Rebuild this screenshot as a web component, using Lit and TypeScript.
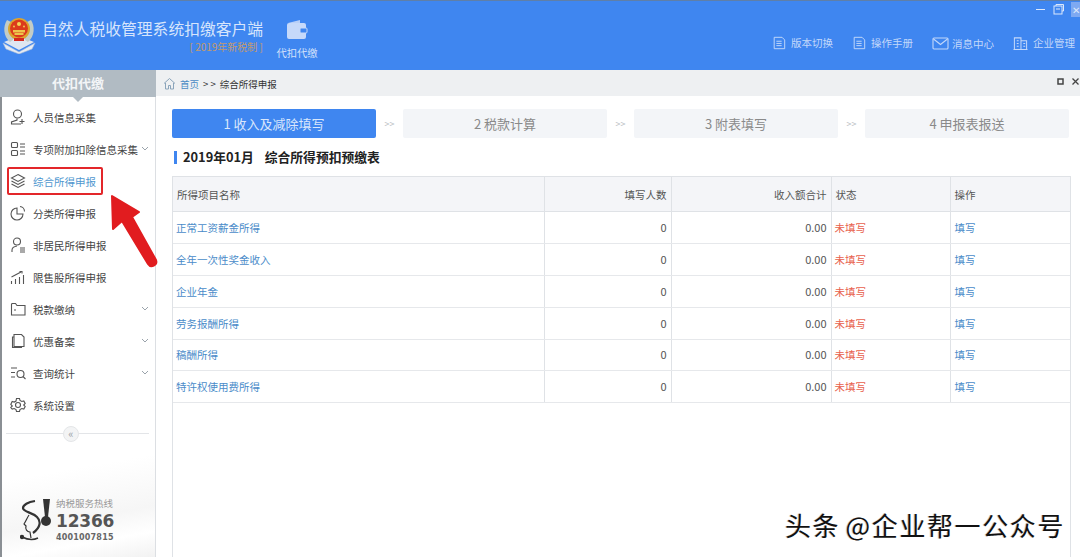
import { LitElement, html, css, svg } from "lit";
import { customElement } from "lit/decorators.js";

const s = (body: unknown, size = 16, vb = "0 0 16 16") => html`<svg width=${size} height=${size} viewBox=${vb} fill="none" stroke="currentColor" stroke-width="1.1">${body}</svg>`;

const docIcon = s(svg`<path d="M2.5 1.5h9l3 3v10h-12z"/><path d="M5 6h6M5 8.5h6M5 11h6"/>`, 14);
const mailIcon = s(svg`<rect x="1" y="2.5" width="15" height="11" rx="1"/><path d="M1.5 3.5l7 5.5 7-5.5"/>`, 17, "0 0 17 16");
const bizIcon = s(svg`<path d="M1.5 14V2h7v12M8.5 5h6v9M.5 14.5h15M4 5h2M4 8h2M4 11h2M11 8h2M11 11h2"/>`, 15);

const menu = [
  ["人员信息采集", s(svg`<circle cx="7.5" cy="5" r="4"/><path d="M7 9.5v1.5L1.5 13v2H11M12 10v5M9.5 12.5h5"/>`), false, false],
  ["专项附加扣除信息采集", s(svg`<rect x="1.5" y="1.5" width="6" height="5" rx="1"/><rect x="1.5" y="9.5" width="6" height="5" rx="1"/><path d="M10 3h5M10 6h5M10 10h5M10 13h5"/>`), true, false],
  ["综合所得申报", s(svg`<path d="M8 1.5l6.5 3.5L8 8.5 1.5 5z"/><path d="M1.5 8L8 11.5 14.5 8M1.5 11L8 14.5 14.5 11"/>`), false, true],
  ["分类所得申报", s(svg`<path d="M7 3a6 6 0 1 0 6 6H7V3z"/><path d="M10 1.500a5 5 0 0 1 4.500 5"/>`), false, false],
  ["非居民所得申报", s(svg`<circle cx="7" cy="4.500" r="3.500"/><path d="M2 15v-2c0-2 2-3.500 5-4M10 11h5M10 13h5M10 15h5"/>`), false, false],
  ["限售股所得申报", s(svg`<path d="M1.500 15v-3M5.500 15v-5M9.500 15V8M13.500 15V6M1.500 8L11 3M9.500 2.500h2.500v2"/>`), false, false],
  ["税款缴纳", s(svg`<path d="M1.500 3.500V14h13.500V4.500H7L5.500 2.500H2zM4 9h2"/>`), true, false],
  ["优惠备案", s(svg`<path d="M4 1.500h7.500l2.500 2.500v9.500H4z"/><path d="M4 4H2.500v10.500h9V13.500"/>`), true, false],
  ["查询统计", s(svg`<path d="M1 3h6M1 7.500h4M1 12h4"/><circle cx="10.500" cy="9" r="3.500"/><path d="M13 11.500l2.500 2.500"/>`), true, false],
  ["系统设置", s(svg`<circle cx="8" cy="8" r="2.500"/><path d="M6.500 1.500h3l.5 2 1.800 1 2-.6 1.400 2.600-1.500 1.500 1.500 1.500-1.400 2.600-2-.6-1.800 1-.5 2h-3l-.5-2-1.800-1-2 .6L.8 10.500 2.300 9 .8 7.500l1.400-3 2 .6 1.800-1z"/>`), false, false],
] as const;

const rows = ["正常工资薪金所得", "全年一次性奖金收入", "企业年金", "劳务报酬所得", "稿酬所得", "特许权使用费所得"];
const steps = ["1 收入及减除填写", "2 税款计算", "3 附表填写", "4 申报表报送"];

@customElement("app-root")
export class AppRoot extends LitElement {
  static styles = css`
    :host { display: block; width: 1080px; height: 557px; overflow: hidden; position: relative; background: #fff;
      font-family: "Noto Sans CJK SC", "Liberation Sans", sans-serif; color: #444; font-size: 11px; }
    .page { display: grid; grid-template-rows: 70px 1fr; height: 557px; }

    header { background: #3f86f0; border-top: 1px solid #5f7fa8; display: flex; color: #cfe0fb; position: relative; box-sizing: border-box; }
    .emblem { margin: 15px 0 0 1px; width: 36px; height: 38px; }
    .brand { margin: 16px 0 0 5px; width: 224px; }
    .brand h1 { margin: 0; font-size: 15.800px; font-weight: 400; line-height: 24px; color: #d7e5fc; white-space: nowrap; }
    .brand p { margin: -1px 0 0; text-align: right; font-size: 10px; line-height: 14px; color: #c39a6c; padding-right: 3px; white-space: nowrap; }
    .mod { margin: 18px 0 0 9px; display: flex; flex-direction: column; align-items: center; width: 44px; color: #d2e1fb; font-size: 10.300px; gap: 4px; }
    .tools { margin-left: auto; margin-top: 34px; display: flex; gap: 19px; align-items: flex-start; padding-right: 5px; height: 18px; }
    .tool { display: flex; align-items: center; gap: 5px; font-size: 10.500px; color: #c3d8fa; line-height: 16px; white-space: nowrap; }
    .tool.m { gap: 3px; }
    .winbtn { position: absolute; right: 0; top: 0; display: flex; align-items: center; gap: 7px; height: 17px; color: #dce8fc; }
    .winbtn .x { width: 9px; height: 15px; background: #7ea9f2; display: flex; align-items: center; justify-content: center; font-size: 10px; overflow: hidden; }

    .body { display: grid; grid-template-columns: 156px 1fr; min-height: 0; }
    aside { display: flex; flex-direction: column; border-left: 2px solid #8a8f94; border-right: 1px solid #dcdfe3; box-sizing: border-box; position: relative;
      background: linear-gradient(170deg, #fff 80%, #f6f6f6 90%, #fff 95%, #f2f2f2 100%); }
    .atitle { background: #b1bbc3; color: #f3f5f7; height: 27px; margin: 0 -1px 0 -2px; font-size: 13px; font-weight: 700; text-align: center; line-height: 26px; position: relative; flex: none; }
    .atitle::after { content: ""; position: absolute; left: 73px; bottom: -5px; border: 5px solid transparent; border-top-color: #b1bbc3; border-bottom: 0; }
    .list { padding-top: 4px; }
    .item { height: 32px; display: flex; align-items: center; padding-left: 8px; gap: 7px; font-size: 10.500px; color: #444; white-space: nowrap; position: relative; box-sizing: border-box; }
    .item svg { color: #555; flex: none; }
    .item .chev { position: absolute; left: 139px; top: 13px; color: #9aa3ab; }
    .item.on { color: #4f97cf; }
    .item.on::before { content: ""; position: absolute; left: 5px; top: 2px; width: 96px; height: 28px; box-sizing: border-box; border: 2px solid #e3262a; border-radius: 2px; }
    .collapse { margin: 12px 6px 0 4px; height: 1px; background: #e3e5e8; position: relative; flex: none; }
    .collapse span { position: absolute; left: 57px; top: -7px; width: 14px; height: 14px; border-radius: 50%; background: #f3f4f5; border: 1px solid #e4e6e8; color: #9aa0a6; font-size: 11px; line-height: 13px; text-align: center; }
    .hot { margin-top: auto; padding: 0 0 14px 18px; display: flex; align-items: flex-start; }
    .hot div { display: flex; flex-direction: column; color: #666; }
    .hot small { font-size: 9.500px; color: #999; line-height: 13px; }
    .hot b { font-family: "DejaVu Sans", sans-serif; font-size: 17px; line-height: 22px; letter-spacing: -.2px; color: #555; }
    .hot i { font-style: normal; font-weight: 700; font-family: "DejaVu Sans", sans-serif; font-size: 8px; line-height: 11px; color: #666; letter-spacing: .2px; }

    main { display: flex; flex-direction: column; min-width: 0; min-height: 0; }
    .crumb { background: #eef0f2; height: 26px; flex: none; display: flex; align-items: center; padding: 1px 0 0 7px; box-sizing: border-box; gap: 4px; font-size: 9.500px; color: #333; position: relative; }
    .crumb a { color: #4a8bc4; }
    .crumb .ctrl { position: absolute; right: 1px; top: 8px; display: flex; gap: 8px; align-items: center; color: #444; }
    .stepper { display: flex; align-items: stretch; margin: 13px 11px 0 16px; height: 29px; flex: none; }
    .step { width: 204px; background: #f3f5f8; color: #8a8a8a; font-size: 13px; display: flex; align-items: center; justify-content: center; border-radius: 2px; flex: none; }
    .step.on { background: #3f86f0; color: #d9e7fc; }
    .sep { width: 27px; text-align: center; color: #b8bcc1; font-size: 9px; line-height: 29px; }
    h2 { margin: 9px 0 0 18px; font-size: 12.800px; line-height: 20px; height: 20px; font-weight: 700; color: #222; flex: none; display: flex; align-items: center; gap: 6px; white-space: pre; word-spacing: 2.500px; }
    h2::before { content: ""; width: 3px; height: 13px; background: #3f86f0; }
    .tablewrap { margin: 9px 9px 0 16px; border: 1px solid #dfe2e6; border-bottom: 0; flex: 1; min-height: 0; }
    table { border-collapse: collapse; width: 897px; table-layout: fixed; font-size: 10.500px; }
    th { background: #f4f5f8; font-weight: 400; height: 34px; color: #555; text-align: left; padding: 1px 4px 0; border-right: 1px solid #dfe2e6; border-bottom: 1px solid #dfe2e6; box-sizing: border-box; white-space: nowrap; }
    td { height: 32px; padding: 0 3px 1px; border-right: 1px solid #dfe2e6; border-bottom: 1px solid #e6e8eb; box-sizing: border-box; white-space: nowrap; color: #555; font-size: 11px; }
    tr:nth-child(5) td { height: 31px; }
    th:last-child, td:last-child { border-right: 0; padding-left: 4px; }
    .r { text-align: right; padding-right: 4px; }
    td.l { color: #4a8bc9; font-size: 10.500px; padding-bottom: 0; }
    td.w { color: #e8604c; font-size: 10.500px; padding-bottom: 0; }

    .arrow { position: absolute; left: 105px; top: 193px; pointer-events: none; }
    .mark { position: absolute; left: 785px; top: 507px; font-size: 26px; line-height: 36px; color: #111; font-family: "Noto Sans CJK SC", sans-serif; font-weight: 400; white-space: nowrap; text-shadow: 1px 1px 0 #fff, -1px 0 0 #ccc; letter-spacing: 1.600px; word-spacing: -2px; }
  `;

  render() {
    return html`<div class="page">
      <header>
        <svg class="emblem" viewBox="0 0 36 38">
          <path d="M2 27l16 9 16-9-3 6-13 5-13-5z" fill="#e6ebf3" stroke="#a9bcd8" stroke-width=".6"/>
          <path d="M3 26l15 8 15-8-15-6z" fill="#dfe6f0"/>
          <path d="M6 4C2 10 2 20 9 26l3-2-2-18zM30 4c4 6 4 16-3 22l-3-2 2-18z" fill="#c3ccc6"/>
          <circle cx="18" cy="13" r="11" fill="#dca52f"/>
          <circle cx="18" cy="12.500" r="9" fill="#dc3a1c"/>
          <rect x="12" y="14" width="12" height="2.500" fill="#ecc64c"/>
          <rect x="13.500" y="17" width="9" height="2" fill="#ecc64c"/>
          <circle cx="18" cy="8" r="2" fill="#f3d354"/>
          <circle cx="13" cy="10.500" r=".9" fill="#f3d354"/><circle cx="23" cy="10.500" r=".9" fill="#f3d354"/>
          <rect x="13" y="22" width="10" height="3" fill="#d6291f"/>
        </svg>
        <div class="brand"><h1>自然人税收管理系统扣缴客户端</h1><p>[ 2019年新税制 ]</p></div>
        <div class="mod">
          <svg width="22" height="22" viewBox="0 0 22 22"><path d="M2 4l12-3v3z" fill="#b9d0f8"/><rect x="1" y="4" width="19" height="16" rx="2" fill="#c6d9fa"/><rect x="14" y="9" width="7" height="5" rx="1" fill="#3f86f0" stroke="#c6d9fa"/></svg>
          <span>代扣代缴</span>
        </div>
        <div class="tools">
          <span class="tool">${docIcon}版本切换</span>
          <span class="tool">${docIcon}操作手册</span>
          <span class="tool m">${mailIcon}消息中心</span>
          <span class="tool">${bizIcon}企业管理</span>
        </div>
        <div class="winbtn">
          <svg width="11" height="11" viewBox="0 0 11 11" stroke="currentColor" fill="none"><path d="M1 5.500h9"/></svg>
          <svg width="11" height="11" viewBox="0 0 11 11" stroke="currentColor" fill="none"><rect x="1" y="2" width="8" height="8"/><path d="M3 2V.5h7.500V7H9M3 5h4"/></svg>
          <span class="x">✕</span>
        </div>
      </header>
      <div class="body">
        <aside>
          <div class="atitle">代扣代缴</div>
          <div class="list">
            ${menu.map(([t, ic, ch, on]) => html`<div class="item ${on ? "on" : ""}">${ic}<span>${t}</span>${ch ? html`<svg class="chev" width="8" height="6" viewBox="0 0 8 6" fill="none" stroke="currentColor"><path d="M1 1l3 3 3-3"/></svg>` : ""}</div>`)}
          </div>
          <div class="collapse"><span>«</span></div>
          <div class="hot">
            <svg width="36" height="46" viewBox="0 0 36 46" fill="none" stroke="#333" stroke-width="1.200">
              <path d="M15 4C8 5 3 8 3 11c0 4 9 4 14 9 4 4 4 10-4 16" stroke-width="2.200"/>
              <path d="M9 18c-2 3-3 6-5 9l2 2c-1 3 1 6 4 6l1 6"/>
              <path d="M2 40c6 3 12 3 16 1" stroke-width="1.400"/><circle cx="2" cy="40" r="1.600" fill="#333"/>
              <path d="M23 2h7l-2 18h-3z" fill="#333" stroke="none"/><circle cx="26" cy="24" r="5" fill="#333" stroke="none"/>
            </svg>
            <div><small>纳税服务热线</small><b>12366</b><i>4001007815</i></div>
          </div>
        </aside>
        <main>
          <div class="crumb">
            <svg width="13" height="13" viewBox="0 0 13 13" fill="none" stroke="#8aa4bb"><path d="M1 6.500L6.500 1.500 12 6.500M2.500 6v6h3V8.500h2V12h3V6"/></svg>
            <a>首页</a><span>&gt; &gt;</span><span>综合所得申报</span>
            <div class="ctrl">
              <svg width="7" height="7" viewBox="0 0 7 7" fill="none" stroke="currentColor" stroke-width="1.500"><rect x="1" y="1" width="5" height="5"/></svg>
              <svg width="7" height="7" viewBox="0 0 7 7" fill="none" stroke="currentColor" stroke-width="1.300"><path d="M.5.500l6 6M6.500.500l-6 6"/></svg>
            </div>
          </div>
          <div class="stepper">
            ${steps.map((t, i) => html`${i ? html`<span class="sep">&gt;&gt;</span>` : ""}<div class="step ${i === 0 ? "on" : ""}">${t}</div>`)}
          </div>
          <h2>2019年01月  综合所得预扣预缴表</h2>
          <div class="tablewrap">
            <table>
              <colgroup><col style="width:371px"/><col style="width:127px"/><col style="width:160px"/><col style="width:119px"/><col style="width:120px"/></colgroup>
              <thead><tr><th>所得项目名称</th><th class="r">填写人数</th><th class="r">收入额合计</th><th>状态</th><th>操作</th></tr></thead>
              <tbody>
                ${rows.map((r) => html`<tr><td class="l">${r}</td><td class="r">0</td><td class="r">0.00</td><td class="w">未填写</td><td class="l">填写</td></tr>`)}
              </tbody>
            </table>
          </div>
        </main>
      </div>
      <svg class="arrow" width="60" height="80" viewBox="0 0 60 80">
        <path d="M7 3L8 36 17 28 43 71a4.500 4.500 0 0 0 8-4L27 24 34 19z" fill="#e11c1f" stroke="#e11c1f" stroke-width="2" stroke-linejoin="round"/>
      </svg>
      <div class="mark">头条 @企业帮一公众号</div>
    </div>`;
  }
}
